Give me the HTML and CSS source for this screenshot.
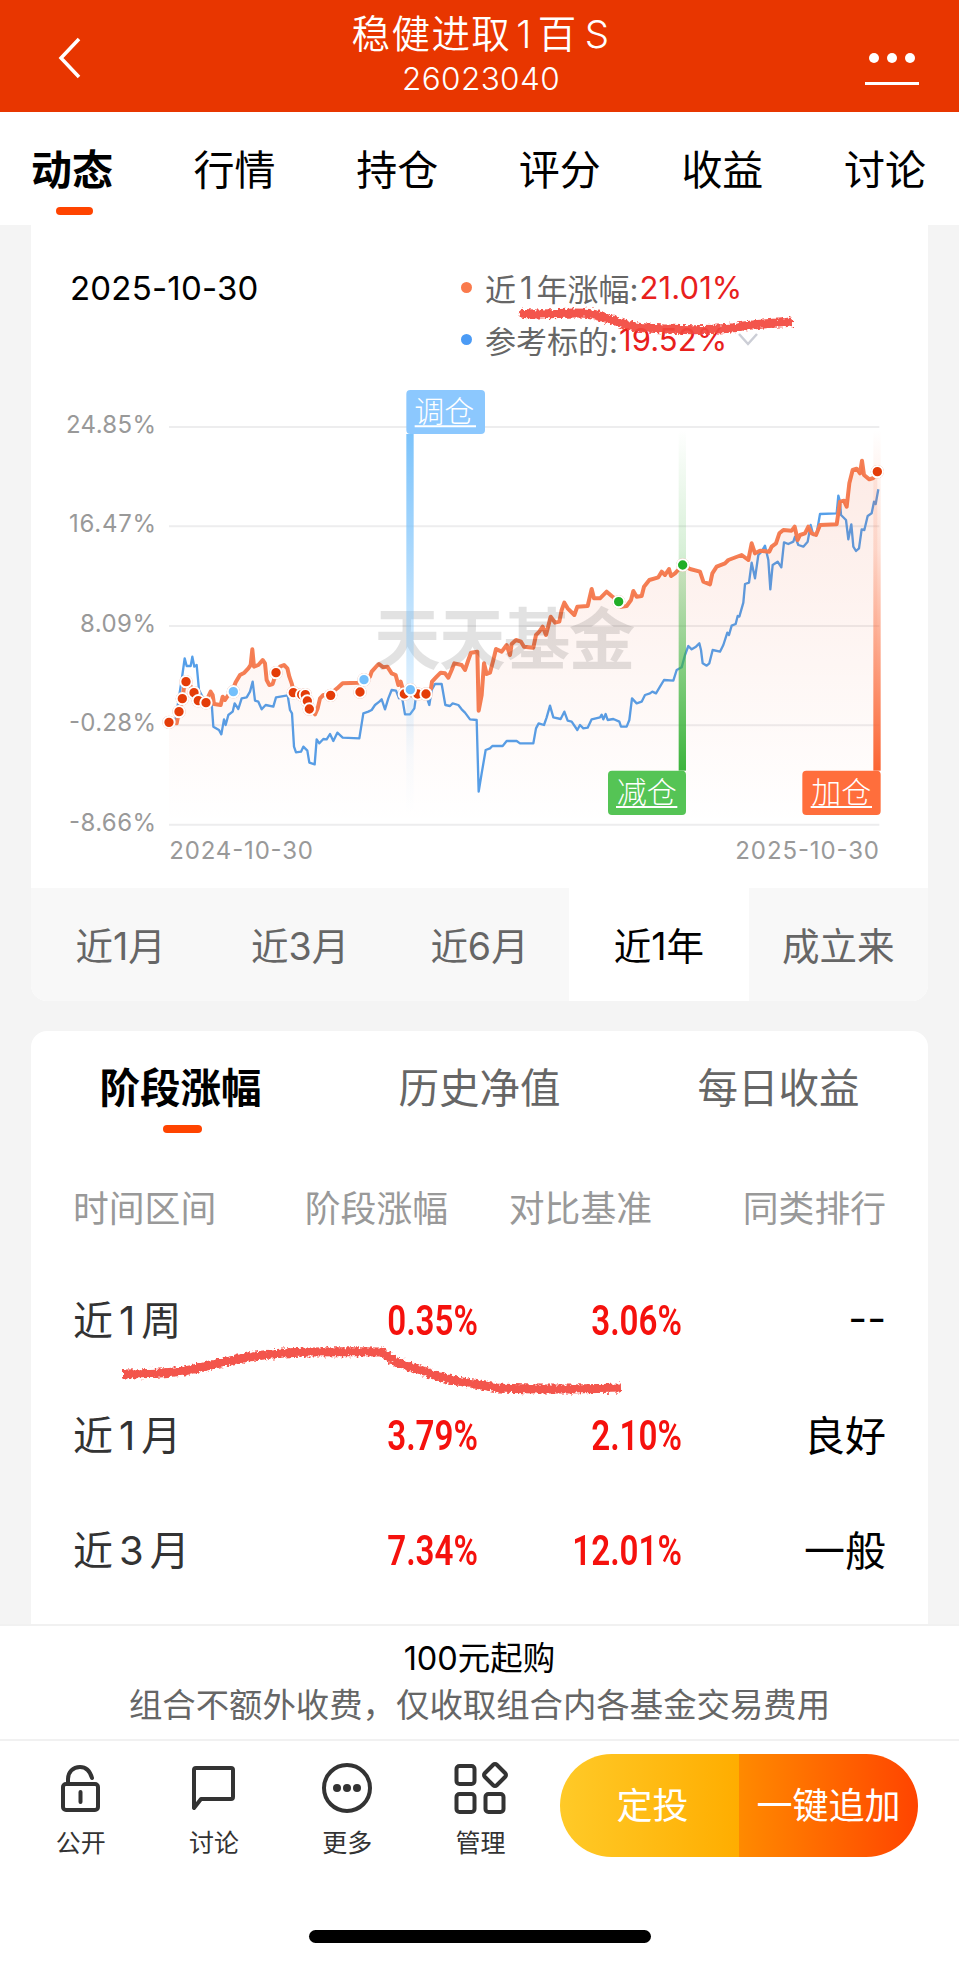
FILE: index.html
```
<!DOCTYPE html>
<html lang="zh-CN">
<head>
    <meta charset="UTF-8">
    <title>稳健进取1百S</title>
    <link rel="stylesheet" href="styles.css">
</head>
<body>
<div class="page">
    <div class="header">
        <svg class="back" viewBox="0 0 24 44"><path d="M21 3 3 22 21 41"/></svg>
        <div class="title">
            <h1>稳健进取<span class="one">1</span>百<span class="s">S</span></h1>
            <p>26023040</p>
        </div>
        <div class="more"><i></i><i></i><i></i></div>
    </div>
    <ul class="nav">
        <li class="selected">动态</li>
        <li>行情</li>
        <li>持仓</li>
        <li>评分</li>
        <li>收益</li>
        <li>讨论</li>
    </ul>

    <div class="card chart-card">
        <div class="legend">
            <div class="date">2025-10-30</div>
            <div class="items">
                <div class="item"><i class="dot orange"></i>近<span class="n">1</span>年涨幅:<b>21.01%</b></div>
                <div class="item"><i class="dot blue"></i>参考标的:<b class="ref">19.52%</b>
                    <svg class="down" viewBox="0 0 22 14"><path d="M2 2 11 12 20 2"/></svg>
                </div>
            </div>
        </div>
        <svg class="chart" viewBox="-357 0 2691 1524">
            <defs>
                <linearGradient id="area" x1="0" y1="240" x2="0" y2="1334" gradientUnits="userSpaceOnUse">
                    <stop offset="0" stop-color="#e83600" stop-opacity=".1"/>
                    <stop offset="1" stop-color="#e83600" stop-opacity="0"/>
                </linearGradient>
                <linearGradient id="barBlue" x1="0" y1="0" x2="0" y2="1">
                    <stop offset="0" stop-color="#7cc3fb"/>
                    <stop offset=".85" stop-color="#7cc3fb" stop-opacity=".05"/>
                    <stop offset="1" stop-color="#7cc3fb" stop-opacity="0"/>
                </linearGradient>
                <linearGradient id="barGreen" x1="0" y1="0" x2="0" y2="1">
                    <stop offset="0" stop-color="#3cb43c" stop-opacity="0"/>
                    <stop offset=".35" stop-color="#3cb43c" stop-opacity=".2"/>
                    <stop offset="1" stop-color="#3cb43c"/>
                </linearGradient>
                <linearGradient id="barOrange" x1="0" y1="0" x2="0" y2="1">
                    <stop offset="0" stop-color="#fb6432" stop-opacity="0"/>
                    <stop offset=".35" stop-color="#fb6432" stop-opacity=".2"/>
                    <stop offset="1" stop-color="#fb6432"/>
                </linearGradient>
            </defs>
            <path class="grid" d="M57 141H2188M57 439H2188M57 738H2188M57 1036H2188M57 1334H2188"/>
            <g class="axis">
                <text x="-252" y="159" textLength="270">24.85%</text>
                <text x="-243" y="457" textLength="261">16.47%</text>
                <text x="-210" y="756" textLength="228">8.09%</text>
                <text x="-243" y="1054" textLength="261">-0.28%</text>
                <text x="-243" y="1352" textLength="261">-8.66%</text>
                <text x="58" y="1436" textLength="431">2024-10-30</text>
                <text x="1756" y="1436" textLength="431">2025-10-30</text>
            </g>
            <path class="line-blue" d="M57 1027 75 1027 88 945 95 900 104 835 110 858 122 858 127 830 133 860 140 855 147 930 160 955 185 970 190 1040 207 1050 214 1063 222 1018 227 1035 235 1005 248 995 254 970 265 987 275 955 290 952 300 935 308 905 315 962 325 965 335 988 347 975 370 980 378 952 413 946 420 990 426 1000 432 1100 438 1117 453 1115 460 1100 472 1112 478 1148 494 1153 500 1078 508 1090 520 1077 530 1078 540 1062 550 1083 562 1058 578 1073 628 1075 640 1000 655 995 665 990 675 975 688 965 695 958 705 988 715 955 725 930 738 932 747 955 755 945 765 1003 780 1003 793 985 798 950 826 940 838 975 845 930 855 912 875 912 886 975 900 978 908 970 925 975 935 988 945 998 960 1018 980 1020 986 1235 995 1180 1007 1110 1020 1105 1027 1098 1058 1098 1070 1083 1100 1083 1110 1090 1150 1090 1158 1045 1166 1030 1182 1035 1190 1012 1200 977 1210 1012 1232 1017 1243 995 1253 1022 1265 1025 1282 1050 1290 1035 1300 1045 1313 1043 1325 1018 1350 1012 1355 1004 1360 1018 1367 1002 1373 1020 1390 1017 1408 1025 1413 1040 1430 1040 1438 1020 1446 955 1460 970 1475 965 1485 945 1500 940 1507 935 1518 940 1530 920 1542 900 1570 902 1580 870 1595 862 1605 825 1615 798 1625 808 1638 800 1648 790 1653 810 1658 850 1670 857 1678 850 1688 810 1710 815 1720 795 1732 758 1737 765 1745 737 1757 732 1763 708 1768 710 1780 668 1785 612 1797 608 1805 548 1815 595 1825 525 1835 515 1845 497 1855 540 1861 628 1868 555 1883 545 1894 562 1902 487 1915 492 1930 485 1935 470 1945 495 1960 500 1973 485 1982 435 1990 465 2000 460 2010 402 2060 400 2065 347 2070 365 2073 405 2088 420 2095 478 2104 433 2110 500 2118 513 2127 505 2135 448 2143 450 2153 408 2165 400 2172 365 2177 372 2185 328"/>
            <path id="fund" class="line-orange" d="M57 1027 80 1030 87 995 97 955 104 910 115 905 132 938 145 962 168 968 175 950 182 935 188 945 192 972 212 975 218 950 225 960 235 945 250 925 257 907 270 885 283 878 295 865 302 855 307 808 312 860 325 855 338 840 345 850 350 900 358 915 368 912 378 880 390 860 402 855 412 865 418 890 425 910 432 938 455 945 465 950 472 965 478 985 490 990 495 1003 503 985 510 955 520 945 542 945 555 930 565 922 578 910 625 908 640 900 660 890 665 875 680 858 687 852 700 862 712 860 725 880 737 885 745 915 752 905 762 940 780 945 800 950 828 942 843 925 846 905 860 890 872 878 885 880 895 893 905 870 913 850 935 855 945 870 955 840 963 818 982 815 986 992 995 945 1002 850 1010 882 1020 878 1030 840 1038 807 1055 815 1070 795 1080 825 1085 792 1098 780 1113 785 1122 800 1150 803 1158 765 1168 755 1178 740 1188 765 1202 710 1215 728 1228 725 1235 690 1243 668 1253 685 1273 705 1282 680 1313 678 1325 627 1332 655 1350 655 1370 635 1385 648 1407 665 1413 680 1430 678 1443 660 1450 633 1460 650 1475 648 1482 620 1498 600 1525 592 1535 575 1545 585 1557 567 1563 588 1575 580 1598 555 1620 567 1650 575 1660 605 1680 613 1687 580 1700 560 1725 550 1735 540 1775 525 1795 540 1805 490 1815 520 1830 512 1858 515 1865 500 1878 490 1888 460 1900 450 1925 452 1934 440 1943 480 1950 465 1965 460 1975 440 1985 460 1998 465 2010 435 2060 433 2070 365 2082 362 2090 380 2098 310 2108 270 2120 266 2130 280 2136 242 2142 285 2158 298 2170 294 2182 275"/>
            <path id="fundArea" fill="url(#area)"/>
            <text class="watermark" x="672" y="852" textLength="784">天天基金</text>
            <rect x="769" y="162" width="22" height="1140" fill="url(#barBlue)"/>
            <rect x="1586" y="150" width="22" height="1022" fill="url(#barGreen)"/>
            <rect x="2170" y="150" width="22" height="1022" fill="url(#barOrange)"/>
            <g class="tag">
                <rect x="769" y="30" width="236" height="132" rx="12" fill="#8cc8fe"/>
                <rect x="1374" y="1172" width="234" height="133" rx="12" fill="#55c455"/>
                <rect x="1957" y="1172" width="235" height="133" rx="12" fill="#ff6e3c"/>
                <text x="793" y="127">调仓</text>
                <text x="1400" y="1269">减仓</text>
                <text x="1984" y="1269">加仓</text>
                <path d="M794 139H978M1398 1281H1582M1982 1281H2166"/>
            </g>
            <g class="points" id="points"></g>
        </svg>
        <ul class="ranges">
            <li>近1月</li>
            <li>近3月</li>
            <li>近6月</li>
            <li class="selected">近1年</li>
            <li>成立来</li>
        </ul>
        <svg class="mark mark-top" viewBox="0 0 290 36">
            <path filter="url(#rough)" d="M8 13C35 16 60 11 80 14 105 20 112 27 135 28 165 30 200 30 220 28 245 23 260 24 280 22"/>
        </svg>
    </div>

    <div class="card table-card">
        <ul class="tabs">
            <li class="selected">阶段涨幅</li>
            <li>历史净值</li>
            <li>每日收益</li>
        </ul>
        <div class="row head"><span>时间区间</span><span>阶段涨幅</span><span>对比基准</span><span>同类排行</span></div>
        <div class="row"><span>近<em>1</em>周</span><b>0.35%</b><b>3.06%</b><strong>--</strong></div>
        <div class="row"><span>近<em>1</em>月</span><b>3.79%</b><b>2.10%</b><strong>良好</strong></div>
        <div class="row"><span>近<em>3</em>月</span><b>7.34%</b><b>12.01%</b><strong>一般</strong></div>
        <svg class="mark mark-row" viewBox="0 0 520 60">
            <defs>
                <filter id="rough" x="-5%" y="-50%" width="110%" height="200%">
                    <feTurbulence type="fractalNoise" baseFrequency=".35" numOctaves="2" seed="4"/>
                    <feDisplacementMap in="SourceGraphic" scale="6" xChannelSelector="R" yChannelSelector="G"/>
                </filter>
            </defs>
            <path filter="url(#rough)" d="M10 34C35 34 55 33 72 31 105 25 125 16 170 13 205 11 235 12 268 12 280 21 290 26 305 29 330 40 350 42 385 48 420 50 450 49 508 48"/>
        </svg>
    </div>

    <div class="notice">
        <p class="min">100元起购</p>
        <p>组合不额外收费，仅收取组合内各基金交易费用</p>
    </div>
    <div class="footer">
        <ul class="actions">
            <li>
                <svg viewBox="0 0 54 54"><rect x="9" y="22" width="35" height="26" rx="3"/><path d="M14 22V17C14 10 19 5 26 5 32 5 36 9 38 16M26.500 30V40"/></svg>
                公开
            </li>
            <li>
                <svg viewBox="0 0 54 54"><path d="M7 8Q7 6 9 6H44Q46 6 46 8V35Q46 37 44 37H14L7 46Z"/></svg>
                讨论
            </li>
            <li>
                <svg viewBox="0 0 54 54"><circle cx="27" cy="26" r="23"/><g class="solid"><circle cx="17" cy="26" r="4"/><circle cx="27" cy="26" r="4"/><circle cx="37" cy="26" r="4"/></g></svg>
                更多
            </li>
            <li>
                <svg viewBox="0 0 54 54"><rect x="2.500" y="4" width="18" height="18" rx="3"/><rect x="2.500" y="32" width="18" height="18" rx="3"/><rect x="31.500" y="32" width="18" height="18" rx="3"/><rect x="32.500" y="4.500" width="17" height="17" rx="2.500" transform="rotate(45 41 13)"/></svg>
                管理
            </li>
        </ul>
        <div class="buttons">
            <div class="btn plan">定投</div>
            <div class="btn add">一键追加</div>
        </div>
    </div>
    <div class="home"></div>
</div>
<script>
    // fill below the fund line
    var fund = document.getElementById('fund')
    document.getElementById('fundArea').setAttribute('d', fund.getAttribute('d') + 'V1334H57Z')

    // buy / adjust / sell points
    var points = [
        ['buy', 57, 1027], ['buy', 87, 995], ['buy', 97, 956], ['buy', 132, 938], ['buy', 108, 905],
        ['buy', 145, 962], ['buy', 168, 968], ['adjust', 250, 935], ['buy', 378, 878], ['buy', 430, 938],
        ['buy', 455, 944], ['buy', 466, 944], ['buy', 472, 963], ['buy', 478, 987], ['buy', 542, 946],
        ['buy', 630, 936], ['adjust', 642, 899], ['buy', 763, 942], ['buy', 803, 942], ['adjust', 781, 929], ['buy', 828, 942],
        ['sell', 1406, 665], ['sell', 1598, 555], ['buy', 2182, 275]
    ]
    var html = ''
    for (var i = 0; i < points.length; i++) {
        html += '<circle class="' + points[i][0] + '" cx="' + points[i][1] + '" cy="' + points[i][2] + '" r="17"/>'
    }
    document.getElementById('points').innerHTML = html
</script>
</body>
</html>
```
FILE: styles.css
```
*{
    margin: 0;
    padding: 0;
    box-sizing: border-box;
}
li{
    list-style: none;
}
svg{
    display: block;
}
body{
    font-family: Inter, "Noto Sans CJK SC", sans-serif;
    background: #f4f4f4;
    color: #000;
}
.page{
    width: 959px;
    height: 1962px;
    overflow: hidden;
}

.header{
    height: 112px;
    padding: 0 40px 0 57px;
    display: flex;
    justify-content: space-between;
    background: #e83600;
    color: #fff;
}
.back{
    width: 24px;
    height: 44px;
    margin: 36px 0 0 1px;
}
.back path{
    fill: none;
    stroke: #fff;
    stroke-width: 3.5;
}
.title{
    text-align: center;
    padding: 9px 0 0 15px;
}
.title h1{
    font-size: 38.5px;
    font-weight: 350;
    line-height: 50px;
    letter-spacing: 1.4px;
    white-space: nowrap;
}
.title .one{
    margin: 0 5px 0 5px;
}
.title .s{
    margin-left: 7px;
}
.title p{
    font-size: 31.5px;
    font-weight: 350;
    line-height: 39px;
    letter-spacing: 0.4px;
}
.more{
    width: 54px;
    height: 32px;
    margin-top: 53px;
    display: flex;
    justify-content: center;
    gap: 8px;
    border-bottom: 3px solid #fff;
}
.more i{
    width: 10px;
    height: 10px;
    border-radius: 50%;
    background: #fff;
}

.nav{
    height: 113px;
    padding: 0 33px 0 31px;
    display: flex;
    justify-content: space-between;
    background: #fff;
    font-size: 41px;
    line-height: 116px;
}
.nav li{
    position: relative;
}
.selected{
    color: #000;
}
.nav .selected,
.tabs .selected{
    font-weight: 700;
}
.nav .selected:after,
.tabs .selected:after{
    content: "";
    position: absolute;
    left: 25px;
    bottom: 10px;
    width: 37px;
    height: 8px;
    border-radius: 4px;
    background: #ff4400;
}

.card{
    width: 897px;
    margin: 0 auto;
    background: #fff;
    position: relative;
}
.chart-card{
    height: 776px;
    border-radius: 0 0 16px 16px;
}
.legend{
    height: 155px;
    padding: 36px 0 0 39px;
    display: flex;
}
.date{
    width: 391px;
    font-size: 33px;
    line-height: 54px;
    letter-spacing: 0.2px;
}
.item{
    height: 52px;
    display: flex;
    align-items: center;
    font-size: 31px;
    color: #666;
    white-space: nowrap;
}
.item .n{
    margin: 0 4px;
}
.item b{
    font-weight: 400;
    color: #e8201c;
    letter-spacing: 0.1px;
    margin-left: 1px;
}
.dot{
    width: 11px;
    height: 11px;
    margin-right: 13px;
    border-radius: 50%;
}
.orange{
    background: #fa7a4c;
}
.blue{
    background: #4b9bf5;
}
.down{
    width: 22px;
    height: 14px;
    margin-left: 10px;
}
.down path{
    fill: none;
    stroke: #ccced6;
    stroke-width: 2.5;
}

.chart{
    width: 897px;
    height: 508px;
}
.chart path{
    stroke-linejoin: round;
}
.grid{
    stroke: #ededee;
    stroke-width: 6;
}
.axis{
    font-size: 72px;
    fill: #999;
}
.line-blue{
    fill: none;
    stroke: #559fe9;
    stroke-width: 7;
}
.line-orange{
    fill: none;
    stroke: #f57f55;
    stroke-width: 12;
}
.watermark{
    font-family: "Noto Sans CJK SC", sans-serif;
    font-size: 200px;
    font-weight: 700;
    fill: #000;
    opacity: .11;
}
.tag text{
    font-size: 90px;
    font-weight: 300;
    fill: #fff;
}
.tag path{
    stroke: #fff;
    stroke-width: 6;
}
.points circle{
    stroke: #fff;
    stroke-width: 6;
    filter: drop-shadow(0 0 2px rgba(200, 60, 20, .5));
}
.buy{
    fill: #e43c08;
}
.adjust{
    fill: #75c0fb;
}
.sell{
    fill: #22ae28;
}

.ranges{
    height: 113px;
    display: flex;
    background: #f8f8f8;
    border-radius: 0 0 16px 16px;
    font-size: 37.5px;
    line-height: 117px;
    text-align: center;
    color: #666;
}
.ranges li{
    flex: 1;
}
.ranges .selected{
    background: #fff;
    height: 113px;
}

.table-card{
    height: 593px;
    margin-top: 30px;
    border-radius: 16px 16px 0 0;
}
.tabs{
    height: 117px;
    display: flex;
    font-size: 40.5px;
    line-height: 116px;
    text-align: center;
    color: #666;
}
.tabs li{
    flex: 1;
    position: relative;
}
.tabs .selected:after{
    left: 132px;
    width: 39px;
    bottom: 15px;
}
.row{
    height: 115px;
    padding: 0 42px 0 42px;
    display: grid;
    grid-template-columns: 201px 204px 204px 1fr;
    align-items: center;
    text-align: right;
    font-size: 40px;
}
.row span:first-child{
    text-align: left;
    color: #333;
    white-space: nowrap;
    margin-top: -5px;
}
.row em{
    font-style: normal;
    margin: 0 6px;
}
.row b{
    font-family: Roboto, sans-serif;
    font-size: 42px;
    font-weight: 600;
    color: #f5110d;
    transform: scaleX(.79);
    transform-origin: right;
}
.row strong{
    font-weight: 400;
    font-size: 41px;
    margin-top: -5px;
}
.row.head{
    font-size: 35.8px;
    color: #999;
    grid-template-columns: 171px 204px 204px 1fr;
}
.row.head span:first-child{
    color: #999;
    margin-top: 0;
}

.mark{
    position: absolute;
    overflow: visible;
}
.mark path{
    fill: none;
    stroke: #f3473d;
    stroke-width: 9;
    stroke-linecap: butt;
    opacity: .92;
}
.mark-top{
    left: 481px;
    top: 75px;
    width: 290px;
    height: 36px;
}
.mark-row{
    left: 82px;
    top: 309px;
    width: 520px;
    height: 60px;
}

.notice{
    height: 115px;
    padding-top: 9px;
    background: #fff;
    border-top: 2px solid #f1f1f1;
    text-align: center;
    font-size: 33.4px;
    line-height: 47px;
    color: #666;
}
.notice .min{
    font-size: 32.5px;
    color: #000;
}
.footer{
    height: 223px;
    padding: 0 41px 0 14px;
    display: flex;
    justify-content: space-between;
    align-items: flex-start;
    background: #fff;
    border-top: 2px solid #f1f1f1;
}
.actions{
    display: flex;
    padding-top: 21px;
}
.actions li{
    width: 133.3px;
    display: flex;
    flex-direction: column;
    align-items: center;
    font-size: 25px;
    line-height: 36px;
    color: #333;
}
.actions svg{
    width: 54px;
    height: 54px;
    margin-bottom: 9px;
    fill: none;
    stroke: #333;
    stroke-width: 4;
    stroke-linecap: round;
    stroke-linejoin: round;
}
.actions .solid{
    fill: #333;
    stroke: none;
}
.buttons{
    width: 358px;
    height: 103px;
    margin-top: 13px;
    display: flex;
    border-radius: 52px;
    overflow: hidden;
    font-size: 36px;
    line-height: 105px;
    text-align: center;
    color: #fff;
}
.btn{
    width: 179px;
}
.plan{
    background: linear-gradient(90deg, #ffca28, #ffad00);
    padding-left: 6px;
}
.add{
    background: linear-gradient(90deg, #ff8a00, #ff4400);
}
.home{
    position: absolute;
    left: 309px;
    top: 1930px;
    width: 342px;
    height: 13px;
    border-radius: 7px;
    background: #000;
}
```
